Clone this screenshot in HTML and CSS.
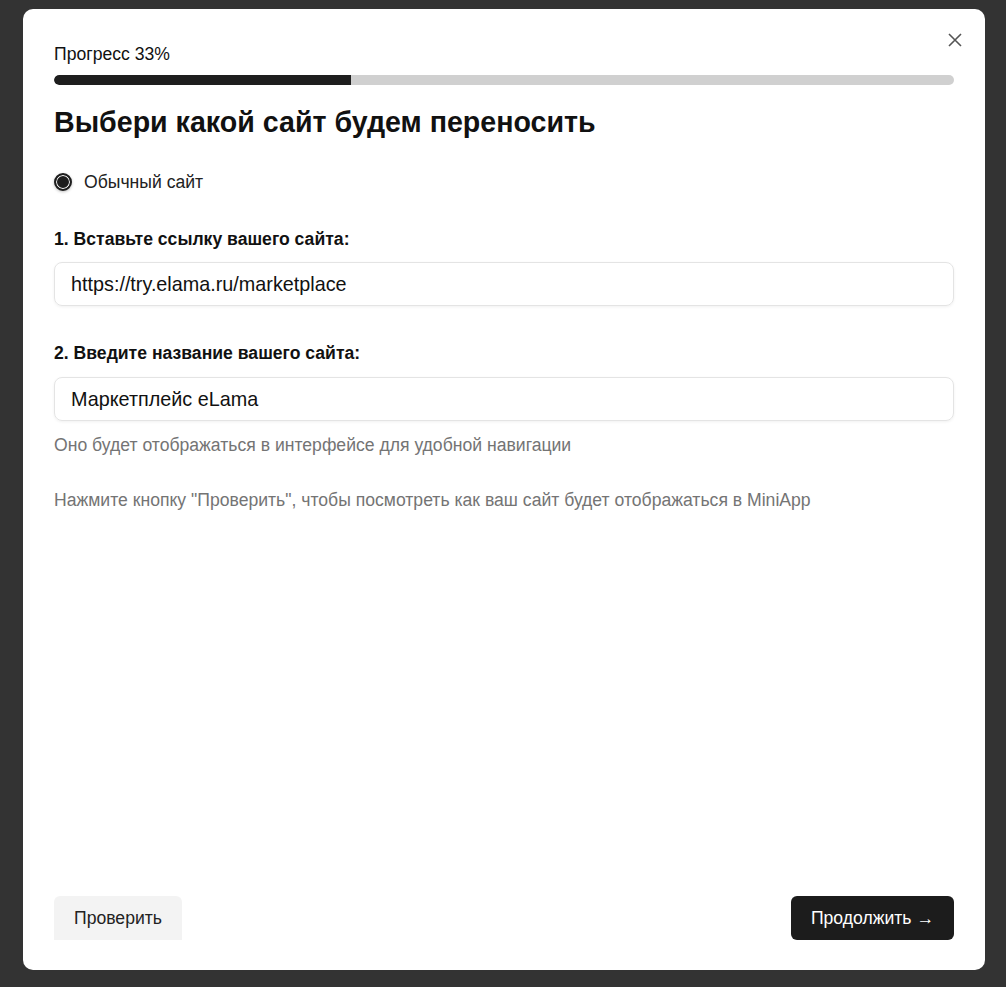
FILE: index.html
```html
<!DOCTYPE html>
<html lang="ru">
<head>
<meta charset="utf-8">
<link rel="stylesheet" href="styles.css">
</head>
<body>
<div class="modal">
  <button class="close" aria-label="Закрыть">
    <svg width="14" height="14" viewBox="0 0 14 14"><path d="M1 1L13 13M13 1L1 13" stroke="#555" stroke-width="1.6" fill="none"/></svg>
  </button>
  <div class="progress-label">Прогресс 33%</div>
  <div class="progress"><div class="progress-fill" style="width:33%"></div></div>
  <h1 class="title">Выбери какой сайт будем переносить</h1>
  <label class="radio-row"><span class="radio"></span><span>Обычный сайт</span></label>
  <div class="field field-first">
    <div class="field-label">1. Вставьте ссылку вашего сайта:</div>
    <div class="input">https://try.elama.ru/marketplace</div>
  </div>
  <div class="field field-second">
    <div class="field-label">2. Введите название вашего сайта:</div>
    <div class="input">Маркетплейс eLama</div>
    <div class="hint">Оно будет отображаться в интерфейсе для удобной навигации</div>
  </div>
  <div class="hint hint-gap">Нажмите кнопку "Проверить", чтобы посмотреть как ваш сайт будет отображаться в MiniApp</div>
  <div class="actions">
    <button class="btn btn-light">Проверить</button>
    <button class="btn btn-dark">Продолжить →</button>
  </div>
</div>
</body>
</html>
```
FILE: styles.css
```css
html, body {
  margin: 0;
  padding: 0;
  background: #333333;
  height: 100%;
}
body {
  font-family: "Liberation Sans", Arial, sans-serif;
  color: #111;
  padding: 9px 21px 17px 23px;
  box-sizing: border-box;
}
.modal {
  position: relative;
  background: #fff;
  border-radius: 10px;
  height: 961px;
  box-sizing: border-box;
  padding: 36px 31px 30px 31px;
  display: flex;
  flex-direction: column;
}
.close {
  position: absolute;
  top: 24px;
  right: 23px;
  width: 14px;
  height: 14px;
  padding: 0;
  border: 0;
  background: none;
  display: flex;
}
.progress-label {
  font-size: 17.6px;
  line-height: 18px;
  color: #111;
}
.progress {
  margin-top: 12px;
  height: 10px;
  border-radius: 5px;
  background: #d0d0d0;
  overflow: hidden;
}
.progress-fill {
  height: 100%;
  background: #1e1e1e;
  border-radius: 5px 0 0 5px;
}
.title {
  margin: 21px 0 0;
  font-size: 28.6px;
  line-height: 32px;
  font-weight: 700;
  color: #111;
}
.radio-row {
  margin-top: 35px;
  display: flex;
  align-items: center;
  gap: 12px;
  font-size: 17.6px;
  line-height: 18px;
  color: #222;
}
.radio {
  width: 14px;
  height: 14px;
  border-radius: 50%;
  background: #1e1e1e;
  border: 2px solid #1e1e1e;
  box-shadow: inset 0 0 0 1px #fff, 0 1px 3px rgba(0,0,0,0.25);
}
.field {
  display: flex;
  flex-direction: column;
}
.field-first {
  margin-top: 39px;
}
.field-second {
  margin-top: 38px;
}
.field-label {
  font-size: 17.6px;
  line-height: 18px;
  font-weight: 700;
  color: #111;
  margin-bottom: 15px;
}
.field-first .field-label {
  margin-bottom: 14px;
}
.input {
  height: 42px;
  border: 1px solid #e4e4e4;
  border-radius: 8px;
  padding: 0 16px;
  font-size: 19.8px;
  line-height: 42px;
  color: #111;
  box-shadow: 0 1px 3px rgba(0,0,0,0.06);
}
.hint {
  margin-top: 15px;
  font-size: 17.6px;
  line-height: 18px;
  color: #747474;
}
.hint-gap {
  margin-top: 37px;
}
.actions {
  margin-top: auto;
  display: flex;
  justify-content: space-between;
}
.btn {
  height: 44px;
  border: 0;
  border-radius: 6px;
  padding: 0 20px;
  font-family: "Liberation Sans", Arial, sans-serif;
  font-size: 17.6px;
}
.btn-light {
  background: #f3f3f3;
  color: #222;
  border-radius: 6px 6px 0 0;
}
.btn-dark {
  background: #1c1c1c;
  color: #fff;
}
```
